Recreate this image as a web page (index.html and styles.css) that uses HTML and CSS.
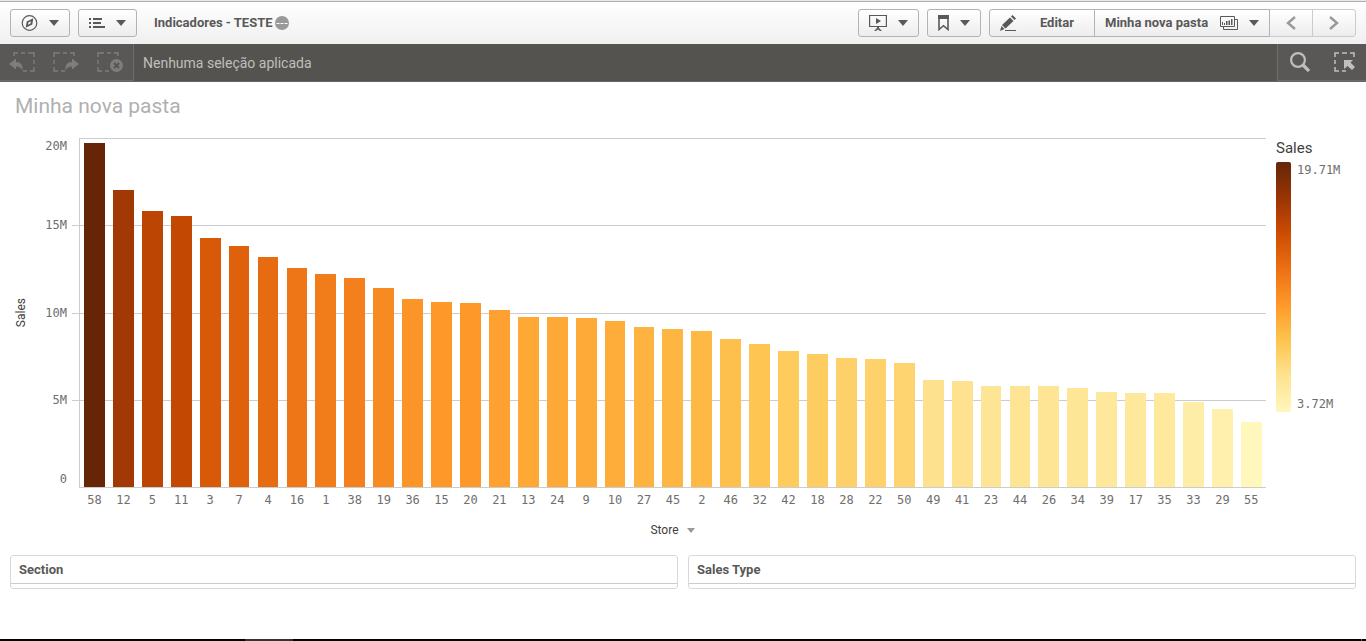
FILE: index.html
```html
<!DOCTYPE html>
<html lang="pt-BR">
<head>
<meta charset="utf-8">
<title>Indicadores - TESTE</title>
<link rel="stylesheet" href="styles.css">
</head>
<body>
<header class="toolbar">
  <button class="btn" aria-label="Navegação">
    <svg width="17" height="16" viewBox="0 0 17 16"><circle cx="8.500" cy="8" r="7.300" fill="none" stroke="#595959" stroke-width="1.200"/><path fill="#595959" fill-rule="evenodd" d="M12.300 3.200 11.300 9.600 4.700 12.800 5.700 6.400zM9.900 6.300 7.400 7.400 7 9.700 9.500 8.600z"/></svg>
    <span class="caret"></span>
  </button>
  <button class="btn" aria-label="Menu">
    <svg width="16" height="12" viewBox="0 0 16 12" fill="#595959"><path d="M0 1h2v2H0zM0 5h2v2H0zM0 9h2v2H0zM4 1h9v2H4zM4 5h8v2H4zM4 9h12v2H4z"/></svg>
    <span class="caret"></span>
  </button>
  <div class="app-name">
    <span>Indicadores - TESTE</span>
    <svg width="14" height="14" viewBox="0 0 14 14"><circle cx="7" cy="7" r="7" fill="#999"/><path stroke="#fff" d="M1.500 7.500h3M5.500 7.500h3M9.500 7.500h3"/></svg>
  </div>
  <button class="btn" aria-label="Apresentação">
    <svg width="18" height="17" viewBox="0 0 18 17"><path fill="none" stroke="#595959" stroke-width="1.200" d="M.6 1.500h16.800v11H.6z"/><path fill="#595959" d="M7 4l5 3-5 3zM8 13h2v1l3 3h-2l-2-1.500L7 17H5l3-3z"/></svg>
    <span class="caret"></span>
  </button>
  <button class="btn" aria-label="Favoritos">
    <svg width="11" height="16" viewBox="0 0 11 16"><path fill="none" stroke="#595959" stroke-width="1.600" d="M1 1h9v13.500l-4.500-3.800L1 14.500z"/><path fill="#595959" d="M0 0h11v4H0z"/></svg>
    <span class="caret"></span>
  </button>
  <div class="group">
    <button class="btn btn-edit">
      <svg width="16" height="16" viewBox="0 0 16 16" fill="#595959"><path d="M10 2.500l3.500 3.500-8 7.500L2 10zM11 1.500 12.500 0 16 3.500 14.500 5zM1.500 11 4.500 14 0 16zM5 15h11v1H5z"/></svg>
      <span>Editar</span>
    </button>
    <button class="btn btn-sheet">
      <span>Minha nova pasta</span>
      <svg width="18" height="14" viewBox="0 0 18 14"><path fill="none" stroke="#595959" d="M.5.500h14v10H.5zM15 3.500h2.500v10h-14V11"/><path fill="#595959" d="M2 6h1v3H2zM4 7h1v2H4zM6 5h1.500v4H6zM8.500 4.500H10V9H8.500zM11 3h1.500v6H11z"/></svg>
      <span class="caret"></span>
    </button>
    <button class="btn nav" aria-label="Anterior"><svg width="10" height="14" viewBox="0 0 10 14"><path fill="none" stroke="#999" stroke-width="2.400" d="M9 1 2 7l7 6"/></svg></button>
    <button class="btn nav" aria-label="Próxima"><svg width="10" height="14" viewBox="0 0 10 14"><path fill="none" stroke="#999" stroke-width="2.400" d="M1 1l7 6-7 6"/></svg></button>
  </div>
</header>

<section class="selections">
  <div class="sel-tools sel-left">
    <button class="tool" aria-label="Voltar"><svg width="26" height="20" viewBox="0 0 26 20"><path fill="none" stroke="#7d7d7b" stroke-width="1.400" d="M5 4V1h4M12 1h4M19 1h6v4M25 8v4M25 15v4h-4M18 19h-4"/><path fill="#7d7d7b" d="M0 12 7 6.500V10c5 0 7 3 6.500 8.500-1.500-3-3-4-6.500-4v3z"/></svg></button>
    <button class="tool" aria-label="Avançar"><svg width="26" height="20" viewBox="0 0 26 20"><path fill="none" stroke="#7d7d7b" stroke-width="1.400" d="M21 4V1h-4M14 1h-4M7 1H1v4M1 8v4M1 15v4h4M8 19h4"/><path fill="#7d7d7b" d="M26 12 19 6.500V10c-5 0-7 3-6.500 8.500 1.500-3 3-4 6.500-4v3z"/></svg></button>
    <button class="tool" aria-label="Limpar seleções"><svg width="26" height="20" viewBox="0 0 26 20"><path fill="none" stroke="#7d7d7b" stroke-width="1.400" d="M21 4V1h-4M14 1h-4M7 1H1v4M1 8v4M1 15v4h4M8 19h4"/><circle cx="19.500" cy="13.500" r="6.500" fill="#7d7d7b"/><path stroke="#575654" stroke-width="2" d="M17 11l5 5M22 11l-5 5"/></svg></button>
  </div>
  <p class="sel-text">Nenhuma seleção aplicada</p>
  <div class="sel-tools sel-right">
    <button class="tool" aria-label="Pesquisar"><svg width="20" height="20" viewBox="0 0 20 20" fill="none" stroke="#bfbfbd"><circle cx="8" cy="8" r="6.900" stroke-width="2.200"/><path stroke-width="3.200" d="M13 13l6 6"/></svg></button>
    <button class="tool" aria-label="Ferramenta de seleções"><svg width="21" height="20" viewBox="0 0 21 20"><path stroke="#bfbfbd" stroke-width="1.500" fill="none" d="M1 5V1h4M8 1h5M16 1h4v4M1 8v4M1 15v4h4M8 19h4"/><path fill="#bfbfbd" d="M10 8h9l-2.500 2.500L21 15l-3 3-4.500-4-3.500 3z"/></svg></button>
  </div>
</section>

<main class="sheet">
  <h1 class="sheet-title">Minha nova pasta</h1>

  <section class="chart">
    <div class="y-title"><span>Sales</span></div>
    <div class="y-axis">
      <div class="y-band"><span>20M</span></div>
      <div class="y-band"><span>15M</span></div>
      <div class="y-band"><span>10M</span></div>
      <div class="y-band y-last"><span>5M</span><span>0</span></div>
    </div>
    <div class="plot">
      <div class="grid-lines"><i></i><i></i><i></i><i></i></div>
      <div class="bars" id="bars"></div>
    </div>
    <aside class="legend">
      <h2 class="legend-title">Sales</h2>
      <div class="legend-body">
        <div class="legend-ramp"></div>
        <div class="legend-range"><span>19.71M</span><span>3.72M</span></div>
      </div>
    </aside>
    <div class="x-axis" id="x-axis"></div>
    <button class="x-title">Store <span class="caret"></span></button>
  </section>

  <section class="filters">
    <div class="filter"><h2>Section</h2></div>
    <div class="filter"><h2>Sales Type</h2></div>
  </section>
</main>
<footer class="taskbar"><span class="task"></span><span class="peek"></span></footer>
<script src="chart.js"></script>
</body>
</html>
```
FILE: styles.css
```css
* { box-sizing: border-box; }
body {
  margin: 0;
  min-height: 100vh;
  display: flex;
  flex-direction: column;
  background: #fff;
  color: #595959;
  font-family: Roboto, "Open Sans", sans-serif;
  font-size: 13px;
}
button { font: inherit; color: inherit; margin: 0; }
svg { display: block; flex: none; }
h1, h2, p { margin: 0; font-weight: 400; }

.toolbar {
  display: flex;
  align-items: center;
  gap: 8px;
  height: 44px;
  padding: 0 10px;
  border-top: 1px solid #e8e8e8;
  box-shadow: inset 0 1px #b0b0b0;
  background: linear-gradient(#fff, #f0f0f0);
}
.btn {
  display: flex;
  align-items: center;
  justify-content: space-between;
  height: 28px;
  padding: 0 10px;
  gap: 11px;
  border: 1px solid #b3b3b3;
  border-radius: 3px;
  background: linear-gradient(#fff, #ededed);
  font-weight: 700;
}
.caret {
  border: 5px solid transparent;
  border-top: 6px solid #595959;
  border-bottom: 0;
}
.app-name {
  display: flex;
  align-items: center;
  gap: 2px;
  flex: 1;
  padding-left: 9px;
  font-weight: 700;
}
.group { display: flex; }
.group .btn { border-radius: 0; margin-left: -1px; }
.group .btn:first-child { border-radius: 3px 0 0 3px; margin-left: 0; }
.group .btn:last-child { border-radius: 0 3px 3px 0; }
.btn-edit { width: 106px; padding-right: 20px; }
.btn-sheet { width: 176px; gap: 8px; position: relative; }
.group .nav { width: 44px; justify-content: center; border-color: #ccc; }

.selections {
  display: flex;
  height: 38px;
  background: #545350;
  border-bottom: 1px solid #666;
}
.sel-tools {
  display: flex;
  align-items: center;
  background: #595856;
  border-bottom: 1px solid #6b6b69;
}
.sel-left { width: 134px; padding-left: 9px; gap: 18px; border-right: 1px solid #6e6e6c; }
.sel-right { width: 89px; padding: 0 11px 0 12px; justify-content: space-between; border-left: 1px solid #6e6e6c; }
.tool { padding: 0; border: 0; background: none; }
.sel-text { flex: 1; padding-left: 9px; font-size: 14px; line-height: 38px; color: #bfbfbd; }

.sheet { flex: 1; display: flex; flex-direction: column; padding: 0 10px 50px; }
.sheet-title { padding: 10px 5px 0; font-size: 21px; line-height: 28px; color: #b0b0b0; }

.chart {
  flex: 1;
  min-height: 300px;
  margin-top: 18px;
  display: grid;
  grid-template-columns: 22px 47px 1fr 90px;
  grid-template-rows: 1fr 24px 26px;
}
.y-title { display: flex; align-items: center; justify-content: center; font-size: 12px; color: #404040; }
.y-title span { writing-mode: vertical-rl; transform: rotate(180deg); }
.y-axis, .x-axis, .legend-range {
  font-family: "DejaVu Sans Mono", monospace;
  font-size: 12px;
  line-height: 16px;
  color: #6e6e6e;
}
.y-axis { display: grid; grid-template-rows: repeat(4, minmax(0, 1fr)); border-bottom: 1px solid transparent; }
.y-band {
  text-align: right;
  padding-right: 12px;
  background: linear-gradient(#ccc, #ccc) right top / 7px 1px no-repeat;
}
.y-band span { display: block; margin-top: -8px; }
.y-band:first-child { background: none; }
.y-band:first-child span { margin-top: 0; }
.y-last { display: flex; flex-direction: column; justify-content: space-between; }
.plot { display: grid; border-left: 1px solid #ccc; border-bottom: 1px solid #ccc; }
.grid-lines, .bars { grid-area: 1 / 1; }
.grid-lines { display: grid; grid-template-rows: repeat(4, minmax(0, 1fr)); }
.grid-lines i { border-top: 1px solid #ccc; }
.bars { display: flex; align-items: flex-end; }
.slot { flex: 1; height: 100%; display: flex; align-items: flex-end; justify-content: center; }
.bar { width: 72%; }
.x-axis { grid-column: 3; display: flex; padding: 4px 0 0 1px; }
.x-axis span { flex: 1; text-align: center; }
.x-title {
  grid-column: 3;
  justify-self: center;
  align-self: end;
  display: flex;
  align-items: center;
  gap: 8px;
  padding: 0;
  border: 0;
  background: none;
  font-size: 12px;
  line-height: 16px;
  color: #404040;
}
.x-title .caret { border-top-color: #999; border-left-width: 4px; border-right-width: 4px; border-top-width: 5px; }

.legend { padding-left: 10px; }
.legend-title { font-size: 15px; line-height: 20px; color: #404040; }
.legend-body { display: flex; gap: 6px; height: 250px; margin-top: 4px; }
.legend-ramp {
  width: 15px;
  border-radius: 2px;
  background: linear-gradient(#662506, #993404, #cc4c02, #ec7014, #fe9929, #fec44f, #fee391, #fff7bc);
}
.legend-range { display: flex; flex-direction: column; justify-content: space-between; }

.filters { display: grid; grid-template-columns: 1fr 1fr; gap: 10px; margin-top: 17px; }
.filter { height: 34px; border: 1px solid #d9d9d9; border-radius: 3px; }
.filter h2 {
  padding: 0 8px;
  border-bottom: 1px solid #ccc;
  font-size: 13px;
  font-weight: 700;
  line-height: 27px;
}

.taskbar { display: flex; justify-content: space-between; height: 2px; padding: 0 4px 0 245px; background: #000; }
.task { width: 48px; background: #333; }
.peek { width: 1px; background: #555; }
```
FILE: chart.js
```js
// Sales per store, in millions.
const data = [
  [58, 19.71], [12, 17.01], [5, 15.83], [11, 15.55], [3, 14.25], [7, 13.82], [4, 13.19],
  [16, 12.53], [1, 12.18], [38, 11.95], [19, 11.4], [36, 10.78], [15, 10.63], [20, 10.57],
  [21, 10.14], [13, 9.77], [24, 9.74], [9, 9.68], [10, 9.54], [27, 9.17], [45, 9.05],
  [2, 8.94], [46, 8.48], [32, 8.19], [42, 7.79], [18, 7.64], [28, 7.39], [22, 7.33],
  [50, 7.1], [49, 6.12], [41, 6.06], [23, 5.8], [44, 5.8], [26, 5.78], [34, 5.69],
  [39, 5.43], [17, 5.4], [35, 5.37], [33, 4.89], [29, 4.48], [55, 3.72]
];
const AXIS_MAX = 20;
const MIN = 3.72;
const MAX = 19.71;
const ramp = [
  [102, 37, 6], [153, 52, 4], [204, 76, 2], [236, 112, 20],
  [254, 153, 41], [254, 196, 79], [254, 227, 145], [255, 247, 188]
];

function colorFor(value) {
  const pos = (MAX - value) / (MAX - MIN) * (ramp.length - 1);
  const i = Math.min(Math.floor(pos), ramp.length - 2);
  const mix = ramp[i].map((c, k) => Math.round(c + (ramp[i + 1][k] - c) * (pos - i)));
  return `rgb(${mix.join(",")})`;
}

const bars = document.getElementById("bars");
const axis = document.getElementById("x-axis");
for (const [store, sales] of data) {
  const slot = document.createElement("div");
  slot.className = "slot";
  const bar = document.createElement("div");
  bar.className = "bar";
  bar.style.height = `${sales / AXIS_MAX * 100}%`;
  bar.style.background = colorFor(sales);
  slot.append(bar);
  bars.append(slot);
  const label = document.createElement("span");
  label.textContent = store;
  axis.append(label);
}
```
